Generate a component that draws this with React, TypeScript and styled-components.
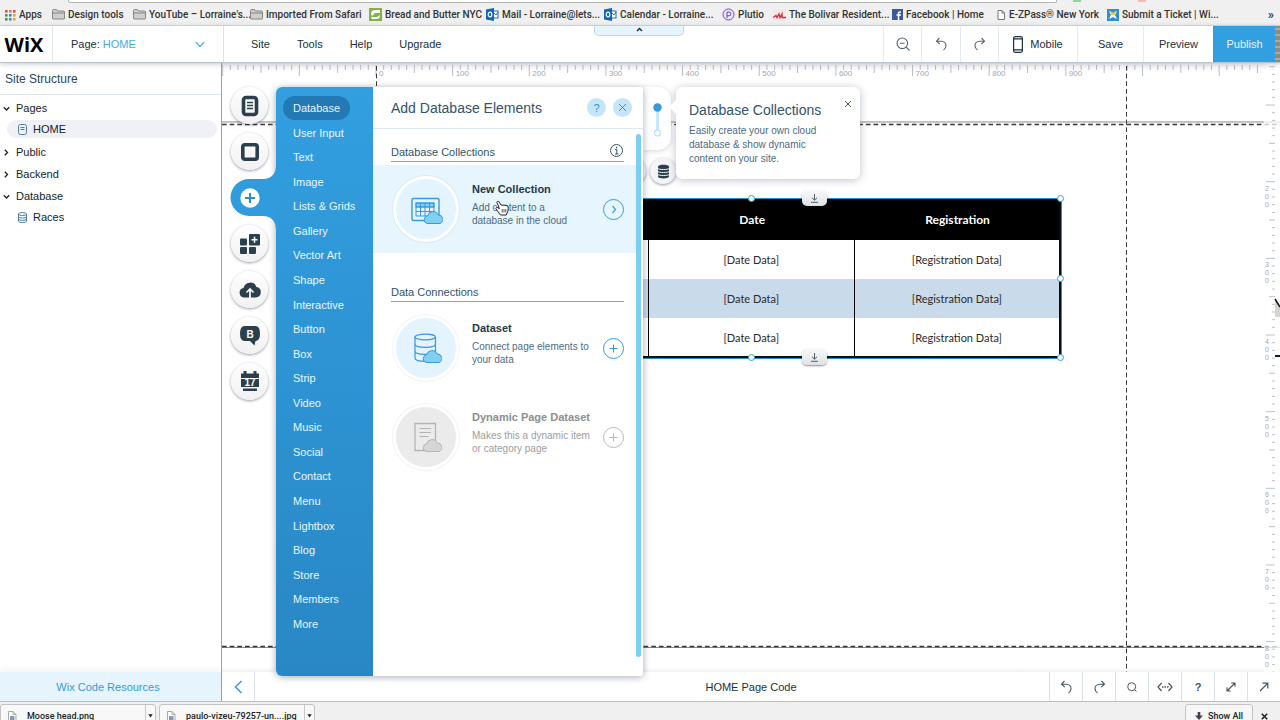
import React from "react";
import styled, { createGlobalStyle, css } from "styled-components";

const sans = `"Liberation Sans", Arial, sans-serif`;
const chrome = `Roboto, Inter, sans-serif`;
const blue = "#3899db";
const slate = "#32536a";
const ink = "#2b3f4c";

const GlobalStyle = createGlobalStyle`
  *, *::before, *::after { box-sizing: border-box; }
  body { margin: 0; background: #fff; font-family: ${sans}; font-size: 11px; color: #20303c; }
  button, select { font: inherit; color: inherit; background: none; border: 0; padding: 0; margin: 0; }
  a { color: inherit; text-decoration: none; }
  ul, h1, h2, h3, p { margin: 0; padding: 0; font-size: inherit; font-weight: 400; list-style: none; }
  svg { display: block; flex: none; }
`;

const Window = styled.div`
  display: flex;
  flex-direction: column;
  height: 100vh;
  min-height: 640px;
  overflow: hidden;
`;

/* ---------- browser chrome ---------- */

const AddressEdge = styled.div`
  display: flex;
  height: 3px;
  padding: 0 134px 0 68px;
  background: #f0f0f0;
`;
const AddressField = styled.div`
  flex: 1;
  height: 3px;
  background: #fff;
  border: 1px solid #b5b5b5;
  border-top: 0;
  border-radius: 0 0 2px 2px;
`;
const ExtensionEdge = styled.span<{ $color: string; $gap: number }>`
  width: 8px;
  height: 2px;
  margin-left: ${(p) => p.$gap}px;
  background: ${(p) => p.$color};
`;
const Bookmarks = styled.nav`
  flex: none;
  display: flex;
  align-items: center;
  height: 23px;
  padding: 1px 6px 0 4px;
  background: #f0f0f0;
  border-bottom: 1px solid #dcdcdc;
  font-family: ${chrome};
  font-size: 10px;
  font-weight: 500;
  color: #333;
`;
const Bookmark = styled.a<{ $width: number }>`
  flex: none;
  display: flex;
  align-items: center;
  gap: 3px;
  width: ${(p) => p.$width}px;
  white-space: nowrap;
`;
const MoreBookmarks = styled.button`
  margin-left: auto;
  font-size: 13px;
`;

/* ---------- editor top bar ---------- */

const TopBar = styled.header`
  position: relative;
  z-index: 5;
  flex: none;
  display: flex;
  height: 37px;
  background: #fff;
  border-bottom: 1px solid #b9c1cb;
  box-shadow: 0 1px 5px rgba(40, 50, 80, 0.28);
`;
const Logo = styled.a`
  display: flex;
  align-items: center;
  justify-content: center;
  width: 53px;
  padding-right: 4px;
  border-right: 1px solid #dfe8f0;
  font: 700 20px "Open Sans", sans-serif;
  color: #000;
`;
const PagePicker = styled.label`
  position: relative;
  display: flex;
  align-items: center;
  gap: 3px;
  width: 171px;
  padding: 0 18px;
  border-right: 1px solid #d5e4ee;
  > svg { position: absolute; right: 18px; top: 15px; pointer-events: none; }
`;
const PageSelect = styled.select`
  flex: 1;
  appearance: none;
  color: #4aa9e0;
  outline: none;
`;
const Menu = styled.nav`
  display: flex;
  align-items: center;
  gap: 27px;
  padding-left: 27px;
  margin-right: auto;
`;
const PullTab = styled.button`
  position: absolute;
  top: 0;
  left: calc(50% - 46px);
  display: flex;
  justify-content: center;
  width: 90px;
  height: 10px;
  background: #e6f4fc;
  border: 1px solid #bcd9ea;
  border-top: 0;
  border-radius: 0 0 5px 5px;
`;
const BarCell = styled.button<{ $width: number; $primary?: boolean; $icon?: boolean }>`
  display: flex;
  align-items: center;
  justify-content: center;
  gap: 7px;
  width: ${(p) => p.$width}px;
  height: 36px;
  border-left: 1px solid #e3ebf0;
  ${(p) => p.$icon && css`color: #59636d;`}
  ${(p) => p.$primary && css`
    background: #329fe0;
    border-color: #329fe0;
    color: #e9f5fd;
  `}
`;
const Wallpaper = styled.div`
  width: 5px;
  background: repeating-linear-gradient(#8d8a86 0 2px, #b3a7a0 2px 4px, #80917e 4px 6px);
`;

/* ---------- main area ---------- */

const Main = styled.main`
  flex: 1;
  display: flex;
  min-height: 0;
`;
const Sidebar = styled.aside`
  flex: none;
  display: flex;
  flex-direction: column;
  width: 222px;
  border-right: 1px solid #63b3d8;
`;
const SidebarTitle = styled.h2`
  height: 32px;
  padding: 1px 5px 0;
  line-height: 31px;
  font-size: 12px;
  color: #29465a;
  border-bottom: 1px solid #dfe6ee;
`;
const Tree = styled.ul`
  flex: 1;
  padding-top: 2px;
  color: #16222b;
`;
const Branch = styled.button`
  display: flex;
  align-items: center;
  gap: 6px;
  width: 100%;
  height: 22px;
  padding-left: 3px;
`;
const Leaf = styled.button<{ $selected?: boolean }>`
  display: flex;
  align-items: center;
  gap: 5px;
  width: 210px;
  height: 18px;
  margin: 1px 0 3px 7px;
  padding-left: 10px;
  border-radius: 9px;
  background: ${(p) => (p.$selected ? "#eff1f6" : "none")};
`;
const SidebarFooter = styled.button`
  height: 29px;
  padding-right: 5px;
  background: #e6f5fd;
  color: ${blue};
  box-shadow: 0 -3px 5px rgba(60, 60, 60, 0.05);
`;
const Workspace = styled.section`
  flex: 1;
  display: flex;
  flex-direction: column;
  min-width: 0;
`;
const Canvas = styled.div`
  position: relative;
  z-index: 1;
  flex: 1;
  min-height: 0;
`;
const Stage = styled.div`
  position: absolute;
  inset: 0;
  overflow: hidden;
  background: linear-gradient(rgba(60, 60, 80, 0.06), transparent 10px) , linear-gradient(0deg, #f1f1f1, #fff 5px);
`;
const Layer = styled.svg`
  position: absolute;
  inset: 0;
  width: 100%;
  height: 100%;
`;
const VerticalRuler = styled.svg`
  position: absolute;
  top: 0;
  right: 0;
  width: 16px;
  height: 100%;
  background: rgba(255, 255, 255, 0.75);
`;

const Selection = styled.div`
  position: absolute;
  left: 219px;
  top: 135px;
  width: 621px;
  border: 1px solid #2b8fc9;
`;
const DataTable = styled.table`
  width: 100%;
  table-layout: fixed;
  border-collapse: collapse;
  border-right: 2px solid #021018;
  border-bottom: 2px solid #021018;
  font-family: Lato, "Open Sans", sans-serif;
  font-size: 11px;
  color: #2a2a2a;
`;
const HeadCell = styled.th`
  height: 41px;
  padding: 0 0 0 2px;
  background: #000;
  color: #fff;
  font-weight: 700;
  font-size: 12px;
`;
const DataRow = styled.tr<{ $tinted: boolean }>`
  background: ${(p) => (p.$tinted ? "#c9daea" : "#fff")};
`;
const DataCell = styled.td`
  height: 39px;
  padding: 0;
  text-align: center;
  border-left: 1px solid #000;
`;
const Handle = styled.span<{ $x: string; $y: string }>`
  position: absolute;
  left: ${(p) => p.$x};
  top: ${(p) => p.$y};
  width: 7px;
  height: 7px;
  margin: -4px;
  border: 1px solid #3b9fd8;
  border-radius: 50%;
  background: #fff;
`;
const StretchButton = styled.button<{ $y: string }>`
  position: absolute;
  left: calc(50% + 50px);
  top: ${(p) => p.$y};
  display: flex;
  align-items: center;
  justify-content: center;
  width: 25px;
  height: 16px;
  margin-top: -9px;
  border-radius: 5px;
  background: linear-gradient(#f8f9fa, #dfe2e5);
  box-shadow: 0 1px 2px rgba(0, 0, 0, 0.45);
`;

/* ---------- floating tools ---------- */

const Rail = styled.nav`
  position: absolute;
  z-index: 4;
  left: 9px;
  top: 24px;
  display: flex;
  flex-direction: column;
  gap: 9px;
`;
const RailButton = styled.button<{ $active?: boolean }>`
  position: relative;
  display: flex;
  align-items: center;
  justify-content: center;
  width: 37px;
  height: 37px;
  border-radius: 50%;
  color: ${ink};
  ${(p) => !p.$active && css`
    background: linear-gradient(#fff, #f1f1f3);
    box-shadow: 0 1px 3px rgba(20, 30, 50, 0.45);
  `}
`;
const ActiveTab = styled.svg`
  position: absolute;
  left: -1px;
  top: -14px;
`;
const PlusBadge = styled.svg`
  position: relative;
`;

const SizeSlider = styled.div`
  position: absolute;
  left: 421px;
  top: 24px;
  display: flex;
  justify-content: center;
  width: 28px;
  height: 63px;
  padding-top: 15px;
  background: #fff;
  border-radius: 0 13px 13px 0;
  box-shadow: 0 1px 5px rgba(40, 50, 80, 0.22);
`;
const DataButtons = styled.div`
  position: absolute;
  left: 398px;
  top: 95px;
  display: flex;
  gap: 4px;
`;
const DataButton = styled.button`
  display: flex;
  align-items: center;
  justify-content: center;
  width: 26px;
  height: 26px;
  border-radius: 50%;
  background: #f4f5f7;
  color: ${ink};
  box-shadow: 0 1px 3px rgba(20, 30, 50, 0.45);
`;
const Tip = styled.section`
  position: absolute;
  left: 454px;
  top: 24px;
  width: 184px;
  padding: 15px 13px 13px;
  background: #fff;
  border-radius: 6px;
  box-shadow: 0 1px 8px rgba(40, 50, 80, 0.3);
  color: ${slate};
  &::before {
    content: "";
    position: absolute;
    left: -7px;
    top: 13px;
    border: 7px solid transparent;
    border-left: 0;
    border-right-color: #fff;
  }
`;
const TipTitle = styled.h2`
  font-size: 14px;
  line-height: 16px;
  margin-bottom: 6px;
`;
const TipText = styled.p`
  font-size: 10px;
  line-height: 14px;
  color: #4c6a82;
`;
const TipClose = styled.button`
  position: absolute;
  right: 8px;
  top: 13px;
`;

/* ---------- add panel ---------- */

const AddPanel = styled.section`
  position: absolute;
  z-index: 3;
  left: 54px;
  top: 24px;
  bottom: -4px;
  display: flex;
  width: 367px;
  border-radius: 6px 3px 3px 6px;
  overflow: hidden;
  background: #fff;
`;
const PanelShadow = styled(AddPanel).attrs({ as: "div" })`
  z-index: 2;
  box-shadow: 0 1px 7px rgba(30, 40, 70, 0.4);
`;
const Categories = styled.nav`
  flex: none;
  display: flex;
  flex-direction: column;
  justify-content: space-between;
  align-items: flex-start;
  width: 97px;
  padding: 9px 7px 40px;
  background: linear-gradient(#329fe0, #2987c5);
  color: #eaf6fe;
`;
const Category = styled.button<{ $selected?: boolean }>`
  height: 24px;
  padding: 0 10px;
  border-radius: 12px;
  background: ${(p) => (p.$selected ? "#2279b4" : "none")};
`;
const PanelBody = styled.div`
  flex: 1;
  display: flex;
  flex-direction: column;
  min-width: 0;
`;
const PanelHeader = styled.header`
  display: flex;
  align-items: center;
  gap: 7px;
  height: 42px;
  padding: 0 11px 0 18px;
  border-bottom: 1px solid #dde7ee;
  color: ${slate};
`;
const PanelTitle = styled.h1`
  flex: 1;
  font-size: 14px;
`;
const RoundButton = styled.button`
  display: flex;
  align-items: center;
  justify-content: center;
  width: 19px;
  height: 19px;
  border-radius: 50%;
  background: #c5e5f9;
  color: #2f93d0;
`;
const ScrollArea = styled.div`
  flex: 1;
  display: flex;
  min-height: 0;
`;
const Sections = styled.div`
  flex: 1;
  min-width: 0;
`;
const ScrollTrack = styled.div`
  flex: none;
  display: flex;
  width: 7px;
  padding: 5px 2px 19px 0;
`;
const ScrollThumb = styled.div`
  flex: 1;
  border-radius: 3px;
  background: #7dcff2;
`;
const SectionHead = styled.div<{ $later?: boolean }>`
  display: flex;
  align-items: center;
  justify-content: space-between;
  height: 20px;
  margin: ${(p) => (p.$later ? "29px 12px 2px 18px" : "13px 12px 3px 18px")};
  border-bottom: 1px solid #8ea2b3;
  color: ${slate};
`;
const SectionTitle = styled.h2`
  padding-top: 1px;
`;
const Entry = styled.article<{ $hot?: boolean; $muted?: boolean }>`
  display: flex;
  align-items: center;
  height: 88px;
  margin-bottom: 1px;
  padding: 0 12px 0 20px;
  background: ${(p) => (p.$hot ? "#e6f5fe" : "none")};
  color: ${(p) => (p.$muted ? "#9a9ea1" : "#4f6c7f")};
  --accent: ${(p) => (p.$muted ? "#b7b9bb" : blue)};
`;
const EntryArt = styled.div<{ $muted?: boolean }>`
  flex: none;
  display: flex;
  align-items: center;
  justify-content: center;
  width: 66px;
  height: 66px;
  border: 3px solid #fff;
  border-radius: 50%;
  background: ${(p) => (p.$muted ? "#ebebeb" : "#e3f4fe")};
  box-shadow: 0 0 0 1px rgba(90, 90, 110, 0.07);
`;
const EntryText = styled.div`
  flex: 1;
  min-width: 0;
  padding: 0 0 9px 13px;
  font-size: 10px;
  line-height: 13px;
  white-space: nowrap;
`;
const EntryTitle = styled.h3<{ $muted?: boolean }>`
  margin-bottom: 5px;
  font-size: 11px;
  font-weight: 700;
  color: ${(p) => (p.$muted ? "#8b8e90" : "#22394a")};
`;
const EntryButton = styled.button`
  flex: none;
  display: flex;
  align-items: center;
  justify-content: center;
  width: 21px;
  height: 21px;
  border: 1px solid var(--accent);
  border-radius: 50%;
  color: var(--accent);
`;
const Pointer = styled.svg`
  position: absolute;
  z-index: 6;
  left: 273px;
  top: 137px;
`;

/* ---------- bottom bars ---------- */

const CodeBar = styled.footer`
  flex: none;
  display: grid;
  grid-template-columns: 1fr auto 1fr;
  align-items: center;
  height: 29px;
  background: #fff;
`;
const CodeTools = styled.div`
  display: flex;
  justify-content: flex-end;
`;
const CodeTool = styled.button<{ $edge?: "right" }>`
  display: flex;
  align-items: center;
  justify-content: center;
  width: 33px;
  height: 29px;
  font-weight: 700;
  color: #46555f;
  border-${(p) => p.$edge ?? "left"}: 1px solid #dbe2e8;
`;
const Shelf = styled.footer`
  flex: none;
  display: flex;
  align-items: flex-start;
  gap: 3px;
  height: 19px;
  padding: 2px 8px 0 0;
  overflow: hidden;
  background: #f0f0f0;
  border-top: 1px solid #bdbdbd;
  font-family: ${chrome};
  font-size: 9px;
  font-weight: 500;
  color: #222;
`;
const Download = styled.div`
  display: flex;
  width: 156px;
  height: 24px;
  background: #f8f8f8;
  border: 1px solid #c4c4c4;
  border-radius: 3px 3px 0 0;
`;
const DownloadName = styled.button`
  flex: 1;
  display: flex;
  align-items: center;
  gap: 10px;
  padding-left: 7px;
  text-align: left;
  white-space: nowrap;
`;
const DownloadMenu = styled.button`
  display: flex;
  align-items: center;
  justify-content: center;
  width: 10px;
  border-left: 1px solid #c9c9c9;
`;
const ShowAll = styled.button`
  display: flex;
  align-items: center;
  justify-content: center;
  gap: 5px;
  width: 68px;
  height: 24px;
  margin-left: auto;
  background: #f6f6f6;
  border: 1px solid #c4c4c4;
  border-radius: 3px 3px 0 0;
`;
const ShelfClose = styled.button`
  display: flex;
  align-items: center;
  justify-content: center;
  width: 16px;
  height: 24px;
`;

/* ---------- icons ---------- */

type LineProps = { w: number; h: number; sw?: number; children: React.ReactNode };
const Line = ({ w, h, sw = 1, children }: LineProps) => (
  <svg width={w} height={h} viewBox={`0 0 ${w} ${h}`} fill="none" stroke="currentColor" strokeWidth={sw} aria-hidden="true">
    {children}
  </svg>
);

const AppsIcon = () => (
  <svg width="12" height="12" aria-hidden="true">
    {["#d9534a", "#e07a52", "#d9534a", "#3f9a59", "#3f7fc4", "#e0a83a", "#3f9a59", "#5a8a9c", "#e0a83a"].map((c, i) => (
      <rect key={i} x={(i % 3) * 4 + 1} y={Math.floor(i / 3) * 4 + 1} width="2.6" height="2.6" fill={c} />
    ))}
  </svg>
);
const FolderIcon = () => (
  <svg width="13" height="11" aria-hidden="true">
    <path d="M.5 9.5v-8q0-1 1-1h3l1 1.5h6q1 0 1 1v6.500q0 .5-.5.5H1q-.5 0-.5-.5zM.5 4h12" fill="#cfcfcf" stroke="#858585" />
  </svg>
);
const LeafIcon = () => (
  <svg width="13" height="13" aria-hidden="true">
    <rect width="13" height="13" fill="#7fb24f" />
    <path d="M2 6C2 3 4 2 7 2h4v3H6L3 8zM3 11h4c3 0 4-1 4-4L8 9H2z" fill="#fff" />
  </svg>
);
const OutlookIcon = () => (
  <svg width="13" height="13" aria-hidden="true">
    <rect x="6" y="3" width="6" height="7" fill="#fff" stroke="#1c6fc0" />
    <path d="M7 4l3 3 2-3" stroke="#1c6fc0" fill="none" />
    <path d="M0 1.500L8 0v13l-8-1.500z" fill="#0f67bb" />
    <ellipse cx="4" cy="6.500" rx="1.800" ry="2.300" fill="none" stroke="#fff" strokeWidth="1.200" />
  </svg>
);
const PlutioIcon = () => (
  <svg width="13" height="13" aria-hidden="true" fill="none" stroke="#6b3fd6">
    <circle cx="6.500" cy="6.500" r="5.500" fill="#efe9fd" />
    <path d="M5 10V4h2a1.800 1.800 0 0 1 0 3.800H5" />
  </svg>
);
const WaveIcon = () => (
  <svg width="13" height="12" aria-hidden="true">
    <rect width="13" height="12" fill="#f7e6e6" />
    <path d="M0 8.500l3-2 1 2 2-3.500 1 3.500 2-3.500v3.500h4" fill="none" stroke="#c8324a" strokeWidth="1.300" />
  </svg>
);
const FacebookIcon = () => (
  <svg width="11" height="11" aria-hidden="true">
    <rect width="11" height="11" fill="#3b5998" />
    <path d="M6.500 11V4.200q0-1.500 2.500-1.200M4.500 6H9" fill="none" stroke="#fff" strokeWidth="1.500" />
  </svg>
);
const FileIcon = () => (
  <svg width="9" height="12" aria-hidden="true">
    <path d="M1 1.500h4l2.500 2.500v6.500H1zM5 1.500V4h2.500" fill="#fff" stroke="#777" />
  </svg>
);
const ImageFileIcon = () => (
  <svg width="9" height="12" aria-hidden="true">
    <path d="M.5 1.500h4.500l3 3v7H.5zM5 1.500v3h3" fill="#fff" stroke="#aaa" />
    <rect x="2" y="6" width="4.500" height="4" fill="#8c97b0" />
  </svg>
);
const TicketIcon = () => (
  <svg width="12" height="12" aria-hidden="true">
    <rect width="12" height="12" fill="#2f8fd5" />
    <path d="M2 2l4 2 4-2-2 4 2 4-4-2-4 2 2-4z" fill="#fff" />
    <path d="M3 2l3 2 3-2-1 4H4z" fill="#f4c93a" />
  </svg>
);
const ChevronIcon = ({ open }: { open: boolean }) => (
  <Line w={7} h={7} sw={1.3}>{open ? <path d="M.8 2.300l2.700 2.700 2.700-2.700" /> : <path d="M1.800.8l2.700 2.700-2.700 2.700" />}</Line>
);
const UndoIcon = () => (
  <Line w={13} h={14} sw={1.1}>
    <path d="M4.500 1L1.500 4.200l3.300 3M1.500 4.200h4.700c3.300 0 4.800 2.300 4.800 4.300S10.300 12 8.500 13" />
  </Line>
);
const RedoIcon = () => (
  <Line w={13} h={14} sw={1.1}>
    <path d="M8.500 1l3 3.200-3.300 3M11.500 4.200H6.800C3.500 4.200 2 6.500 2 8.500S2.700 12 4.500 13" />
  </Line>
);
const StretchIcon = () => (
  <Line w={9} h={9}><g stroke="#55606a"><path d="M4.500 0v6M2 3.800l2.500 2.400L7 3.800M1 8.300h7" /></g></Line>
);
const cloud = "M14.500 29.500a3.900 3.900 0 0 1 .6-7.600 5.600 5.600 0 0 1 10.600-.9 4.400 4.400 0 0 1 1.800 8.500z";

const CollectionArt = () => (
  <svg width="34" height="31" aria-hidden="true" fill="none" stroke="#3899db">
    <rect x="3" y="4.500" width="27" height="22" rx="1.500" strokeWidth="1.400" />
    <rect x="7" y="9" width="18" height="4" fill="#7fd0f2" />
    <path d="M7 9h18v13H7zM7 13h18M7 17.500h18M11.500 9v13M16 9v13M20.500 9v13" />
    <path d={cloud} transform="translate(3.500 0)" fill="#7fd0f2" />
  </svg>
);
const DatasetArt = () => (
  <svg width="32" height="32" aria-hidden="true" fill="none" stroke="#3899db" strokeWidth="1.200">
    <path d="M5 5v21c0 2 4 3.300 10.300 3.300s10.200-1.300 10.200-3.300V5M5 12c0 2 4 3.300 10.300 3.300s10.200-1.300 10.200-3.300M5 19c0 2 4 3.300 10.300 3.300s10.200-1.300 10.200-3.300" />
    <ellipse cx="15.200" cy="5" rx="10.200" ry="2.800" />
    <path d={cloud} transform="translate(1.500 1)" fill="#7fd0f2" strokeWidth="1" />
  </svg>
);
const DynamicArt = () => (
  <svg width="32" height="32" aria-hidden="true" fill="none" stroke="#b4b4b4">
    <path d="M5 2.500h20.500v27H5z" strokeWidth="1.300" />
    <path d="M9.500 7.500h11.500M9.500 11.500h11.500M9.500 15.500h9" />
    <path d={cloud} transform="translate(1.500 1)" fill="#d6d6d6" />
  </svg>
);

const railIcons = {
  pages: (
    <Line w={18} h={22}>
      <rect x="2.500" y="2.500" width="13" height="17" rx="2.500" strokeWidth="3.600" />
      <path d="M6 7.500h6M6 10.500h6M6 13.500h6" strokeWidth="1.300" />
    </Line>
  ),
  background: <Line w={20} h={20} sw={3.6}><rect x="2.800" y="2.800" width="14.400" height="14.400" rx="2" /></Line>,
  apps: (
    <svg width="20" height="20" fill="currentColor" aria-hidden="true">
      <rect x="0" y="4.500" width="7" height="7" rx="1" />
      <rect x="9" y="0" width="11" height="11.500" rx="1" />
      <rect x="0" y="13" width="7" height="7" rx="1" />
      <rect x="9" y="13" width="7" height="7" rx="1" />
      <path d="M14.500 2.800v6M11.500 5.800h6" stroke="#fff" strokeWidth="1.500" />
    </svg>
  ),
  upload: (
    <svg width="22" height="17" fill="currentColor" aria-hidden="true">
      <path d="M5 16.500a4.800 4.800 0 0 1-.5-9.500A6.800 6.800 0 0 1 17.500 6a5.300 5.300 0 0 1-.8 10.500z" />
      <path d="M11 17V8.500M7.500 11.500L11 8l3.500 3.500" fill="none" stroke="#fff" strokeWidth="1.700" />
    </svg>
  ),
  blog: (
    <svg width="22" height="21" aria-hidden="true">
      <path d="M5.500 1h11Q21 1 21 8.500T16.500 16L15.500 20.500 11 16H5.500Q1 16 1 8.500T5.500 1z" fill="currentColor" />
      <text x="11" y="12.500" textAnchor="middle" fontFamily={sans} fontSize="10" fontWeight="700" fill="#fff">B</text>
    </svg>
  ),
  bookings: (
    <svg width="20" height="21" aria-hidden="true">
      <path d="M1 2.500h18V7H1zM1 8h18v8H1zM3 17.500h14V20H3z" fill="currentColor" />
      <path d="M5 0v4.500M15 0v4.500" stroke="currentColor" strokeWidth="3" />
      <text x="10" y="14.500" textAnchor="middle" fontFamily={sans} fontSize="10" fontWeight="700" fill="#fff">17</text>
    </svg>
  ),
};

/* ---------- data ---------- */

const bookmarks: { label: string; width: number; icon: React.ReactNode }[] = [
  { label: "Apps", width: 48, icon: <AppsIcon /> },
  { label: "Design tools", width: 81, icon: <FolderIcon /> },
  { label: "YouTube – Lorraine's...", width: 117, icon: <FolderIcon /> },
  { label: "Imported From Safari", width: 119, icon: <FolderIcon /> },
  { label: "Bread and Butter NYC", width: 117, icon: <LeafIcon /> },
  { label: "Mail - Lorraine@lets...", width: 118, icon: <OutlookIcon /> },
  { label: "Calendar - Lorraine...", width: 118, icon: <OutlookIcon /> },
  { label: "Plutio", width: 51, icon: <PlutioIcon /> },
  { label: "The Bolivar Resident...", width: 119, icon: <WaveIcon /> },
  { label: "Facebook | Home", width: 105, icon: <FacebookIcon /> },
  { label: "E-ZPass® New York", width: 110, icon: <FileIcon /> },
  { label: "Submit a Ticket | Wi...", width: 115, icon: <TicketIcon /> },
];
const categories = [
  "Database", "User Input", "Text", "Image", "Lists & Grids", "Gallery", "Vector Art", "Shape",
  "Interactive", "Button", "Box", "Strip", "Video", "Music", "Social", "Contact", "Menu",
  "Lightbox", "Blog", "Store", "Members", "More",
];

/* The page is shown at 76.65% zoom: one ruler tick is ten page pixels. */
const TICK = 7.665;
const ORIGIN_X = 154;
const ORIGIN_Y = -34.6;

const HorizontalRuler = () => (
  <g stroke="#b9bdc4" fontFamily={sans} fontSize="8">
    {Array.from({ length: 260 }, (_, k) => k - 20).map((i) => {
      const x = ORIGIN_X + i * TICK;
      const len = i % 10 === 0 ? 11 : i % 5 === 0 ? 8 : 5;
      return (
        <React.Fragment key={i}>
          <path d={`M${x} 2v${len}`} />
          {i >= 0 && i <= 90 && i % 10 === 0 && (
            <text x={x + 3} y={13} fill="#a3a6ad" stroke="none">{i * 10}</text>
          )}
        </React.Fragment>
      );
    })}
  </g>
);

const SideRuler = () => (
  <VerticalRuler aria-hidden="true" fontFamily={sans} fontSize="7">
    {Array.from({ length: 180 }, (_, i) => {
      const y = ORIGIN_Y + i * TICK;
      const len = i % 10 === 0 ? 9 : i % 5 === 0 ? 6 : 3;
      return (
        <React.Fragment key={i}>
          <path d={`M11 ${y}h-${len}`} stroke="#bfc2c8" />
          {i >= 20 && i <= 80 && i % 10 === 0 && String(i * 10).split("").map((d, n) => (
            <text key={n} x="1" y={y + 9 + n * 8} fill="#a3a6ad">{d}</text>
          ))}
        </React.Fragment>
      );
    })}
    <path d="M11 236l5 8v10h-5z" fill="#d8d4d0" />
    <path d="M11 236l5 8" stroke="#111" strokeWidth="1.500" />
    <path d="M11 293h5" stroke="#0d1c28" strokeWidth="2" />
  </VerticalRuler>
);

const Guides = () => (
  <Layer aria-hidden="true">
    <HorizontalRuler />
    <path d="M0 59h3000" stroke="#c4c4c4" strokeWidth="2" />
    <g stroke="#3a3538" strokeDasharray="4.665 3">
      <path d="M0 61.500h3000" strokeWidth="1.500" />
      <path d="M154.500 3v3000M904.500 3v3000" />
    </g>
    <path d="M0 584.500h3000" stroke="#8b8487" />
    <path d="M0 583.500h3000" stroke="#3a3538" strokeDasharray="4.665 3" strokeWidth="1.500" />
  </Layer>
);

type EntryProps = {
  title: string;
  lines: [string, string];
  art: React.ReactNode;
  action: "open" | "add";
  hot?: boolean;
  muted?: boolean;
};
const PanelEntry = ({ title, lines, art, action, hot, muted }: EntryProps) => (
  <Entry $hot={hot} $muted={muted}>
    <EntryArt $muted={muted}>{art}</EntryArt>
    <EntryText>
      <EntryTitle $muted={muted}>{title}</EntryTitle>
      <p>{lines[0]}<br />{lines[1]}</p>
    </EntryText>
    <EntryButton aria-label={title} disabled={muted}>
      <Line w={9} h={9}>{action === "open" ? <path d="M3.500.8l3 3.700-3 3.700" strokeWidth="1.200" /> : <path d="M4.500.5v8M.5 4.500h8" />}</Line>
    </EntryButton>
  </Entry>
);

export default function App() {
  return (
    <Window>
      <GlobalStyle />
      <AddressEdge>
        <AddressField />
        <ExtensionEdge $color="#8ed69a" $gap={16} />
        <ExtensionEdge $color="#f5b9a8" $gap={57} />
      </AddressEdge>
      <Bookmarks aria-label="Bookmarks">
        {bookmarks.map((b) => (
          <Bookmark key={b.label} href="#" $width={b.width}>{b.icon}{b.label}</Bookmark>
        ))}
        <MoreBookmarks>»</MoreBookmarks>
      </Bookmarks>

      <TopBar>
        <Logo href="#">WiX</Logo>
        <PagePicker>
          Page:
          <PageSelect defaultValue="HOME"><option>HOME</option></PageSelect>
          <svg width="10" height="7" fill="none" stroke="#4fb0e4" aria-hidden="true"><path d="M.8 1l4.200 4.500L9.200 1" strokeWidth="1.200" /></svg>
        </PagePicker>
        <Menu>
          {["Site", "Tools", "Help", "Upgrade"].map((m) => <button key={m}>{m}</button>)}
        </Menu>
        <PullTab aria-label="Hide toolbar"><Line w={7} h={8} sw={1.5}><path d="M1 5l2.500-2.500L6 5" /></Line></PullTab>
        <BarCell $width={38} $icon aria-label="Zoom out">
          <Line w={14} h={14} sw={1.1}><circle cx="6.300" cy="6.300" r="5.300" /><path d="M10.200 10.200l3.300 3.300M4 6.300h4.600" /></Line>
        </BarCell>
        <BarCell $width={39} $icon aria-label="Undo"><UndoIcon /></BarCell>
        <BarCell $width={38} $icon aria-label="Redo"><RedoIcon /></BarCell>
        <BarCell $width={79}>
          <Line w={10} h={17} sw={1.2}><rect x=".6" y=".6" width="8.800" height="15.800" rx="1.800" /><path d="M.6 2.800h8.800M.6 13.800h8.800" /></Line>
          Mobile
        </BarCell>
        <BarCell $width={66}>Save</BarCell>
        <BarCell $width={70}>Preview</BarCell>
        <BarCell $width={62} $primary>Publish</BarCell>
        <Wallpaper />
      </TopBar>

      <Main>
        <Sidebar>
          <SidebarTitle>Site Structure</SidebarTitle>
          <Tree>
            <li>
              <Branch><ChevronIcon open />Pages</Branch>
              <Leaf $selected>
                <Line w={11} h={11}><rect x="1.500" y=".5" width="8" height="10" rx="2" stroke="#4a7f9e" /><path d="M3.500 3.500h4M3.500 5.500h4" stroke="#4a7f9e" /></Line>
                HOME
              </Leaf>
            </li>
            <li><Branch><ChevronIcon open={false} />Public</Branch></li>
            <li><Branch><ChevronIcon open={false} />Backend</Branch></li>
            <li>
              <Branch><ChevronIcon open />Database</Branch>
              <Leaf>
                <Line w={11} h={11}>
                  <g stroke="#4a7f9e"><ellipse cx="5.500" cy="2" rx="4" ry="1.500" /><path d="M1.500 2v7c0 2 8 2 8 0V2M1.500 4.500c0 2 8 2 8 0M1.500 6.800c0 2 8 2 8 0" /></g>
                </Line>
                Races
              </Leaf>
            </li>
          </Tree>
          <SidebarFooter>Wix Code Resources</SidebarFooter>
        </Sidebar>

        <Workspace>
          <Canvas>
            <Stage>
              <Guides />
              <SideRuler />
              <Selection>
                <DataTable>
                  <thead>
                    <tr><HeadCell /><HeadCell>Date</HeadCell><HeadCell>Registration</HeadCell></tr>
                  </thead>
                  <tbody>
                    {[false, true, false].map((tinted, i) => (
                      <DataRow key={i} $tinted={tinted}>
                        <DataCell /><DataCell>[Date Data]</DataCell><DataCell>[Registration Data]</DataCell>
                      </DataRow>
                    ))}
                  </tbody>
                </DataTable>
                <Handle $x="50%" $y="0%" />
                <Handle $x="100%" $y="0%" />
                <Handle $x="100%" $y="50%" />
                <Handle $x="100%" $y="100%" />
                <Handle $x="50%" $y="100%" />
                <StretchButton $y="0%" aria-label="Stretch top"><StretchIcon /></StretchButton>
                <StretchButton $y="100%" aria-label="Stretch bottom"><StretchIcon /></StretchButton>
              </Selection>
            </Stage>

            <SizeSlider>
              <svg width="11" height="37" fill="none" aria-hidden="true">
                <path d="M5.500 6v24" stroke="#c9e8f9" strokeWidth="3" />
                <circle cx="5.500" cy="5.500" r="4.200" fill="#2f9be0" />
                <circle cx="5.500" cy="31" r="3" fill="#fff" stroke="#bfe2f6" strokeWidth="1.300" />
              </svg>
            </SizeSlider>
            <DataButtons>
              <DataButton aria-label="Settings" />
              <DataButton aria-label="Connect to data">
                <svg width="13" height="15" aria-hidden="true">
                  <path d="M1 2.500C1 0 12 0 12 2.500v10c0 2.500-11 2.500-11 0z" fill="currentColor" />
                  <path d="M0 4c1 2 12 2 13 0M0 7c1 2 12 2 13 0M0 10c1 2 12 2 13 0" fill="none" stroke="#f4f5f7" />
                </svg>
              </DataButton>
            </DataButtons>
            <Tip>
              <TipTitle>Database Collections</TipTitle>
              <TipText>Easily create your own cloud<br />database &amp; show dynamic<br />content on your site.</TipText>
              <TipClose aria-label="Close tip"><Line w={8} h={8}><path d="M1 1l6 6M7 1L1 7" /></Line></TipClose>
            </Tip>

            <PanelShadow />
            <AddPanel>
              <Categories>
                {categories.map((c, i) => <Category key={c} $selected={i === 0}>{c}</Category>)}
              </Categories>
              <PanelBody>
                <PanelHeader>
                  <PanelTitle>Add Database Elements</PanelTitle>
                  <RoundButton>?</RoundButton>
                  <RoundButton aria-label="Close"><Line w={9} h={9}><path d="M1 1l7 7M8 1L1 8" /></Line></RoundButton>
                </PanelHeader>
                <ScrollArea>
                  <Sections>
                    <SectionHead>
                      <SectionTitle>Database Collections</SectionTitle>
                      <Line w={15} h={15}>
                        <circle cx="7.500" cy="6.500" r="6" />
                        <path d="M6 5.500h1.800v4.500M6 10h3.500" />
                        <path d="M7 3.500h1.300" strokeWidth="1.300" />
                      </Line>
                    </SectionHead>
                    <PanelEntry hot title="New Collection" lines={["Add content to a", "database in the cloud"]} art={<CollectionArt />} action="open" />
                    <SectionHead $later><SectionTitle>Data Connections</SectionTitle></SectionHead>
                    <PanelEntry title="Dataset" lines={["Connect page elements to", "your data"]} art={<DatasetArt />} action="add" />
                    <PanelEntry muted title="Dynamic Page Dataset" lines={["Makes this a dynamic item", "or category page"]} art={<DynamicArt />} action="add" />
                  </Sections>
                  <ScrollTrack><ScrollThumb /></ScrollTrack>
                </ScrollArea>
              </PanelBody>
            </AddPanel>

            <Rail aria-label="Editor tools">
              <RailButton aria-label="Pages">{railIcons.pages}</RailButton>
              <RailButton aria-label="Background">{railIcons.background}</RailButton>
              <RailButton $active aria-label="Add">
                <ActiveTab width="48" height="65" aria-hidden="true">
                  <path d="M48 0h-2C46 9 41 14 33 14H19a18.500 18.500 0 0 0 0 37h14c8 0 13 5 13 14h2z" fill="#319cdd" />
                </ActiveTab>
                <PlusBadge width="20" height="20" aria-hidden="true">
                  <circle cx="10" cy="10" r="9.700" fill="#fff" />
                  <path d="M10 5v10M5 10h10" stroke="#2a8fd0" strokeWidth="2" />
                </PlusBadge>
              </RailButton>
              <RailButton aria-label="App market">{railIcons.apps}</RailButton>
              <RailButton aria-label="Uploads">{railIcons.upload}</RailButton>
              <RailButton aria-label="Blog">{railIcons.blog}</RailButton>
              <RailButton aria-label="Bookings">{railIcons.bookings}</RailButton>
            </Rail>

            <Pointer width="15" height="17" aria-hidden="true">
              <path d="M3.500 6L1.800 2.500Q2 .8 3.800 1.500L6 5l5 .3q2.500.4 2.300 3l-.5 3.200-1.600 3.500H5.500L2.500 11 .8 8.500Q1 7 2.800 7.600l1.600 1.200z" fill="#fff" stroke="#222" />
              <path d="M7.200 9v3.500M9 9v3.500M10.800 9v3.500" stroke="#333" strokeWidth=".8" />
            </Pointer>
          </Canvas>

          <CodeBar>
            <CodeTool $edge="right" aria-label="Collapse resources">
              <svg width="9" height="14" fill="none" stroke={blue} strokeWidth="1.500" aria-hidden="true"><path d="M7.500 1L1.500 7l6 6" /></svg>
            </CodeTool>
            <span>HOME Page Code</span>
            <CodeTools>
              <CodeTool aria-label="Undo"><UndoIcon /></CodeTool>
              <CodeTool aria-label="Redo"><RedoIcon /></CodeTool>
              <CodeTool aria-label="Find"><Line w={10} h={10}><circle cx="4.700" cy="4.700" r="4" /><path d="M7.500 7.500L9.500 9.500" /></Line></CodeTool>
              <CodeTool aria-label="Format code">
                <Line w={16} h={10} sw={1.2}><path d="M4.500 1L1 5l3.500 4M11.500 1L15 5l-3.500 4" /><path d="M5 5h6.500" strokeDasharray="1.500 1" strokeWidth="1.500" /></Line>
              </CodeTool>
              <CodeTool>?</CodeTool>
              <CodeTool aria-label="Expand"><Line w={10} h={10} sw={1.1}><path d="M1 9l8-8M5.200 1H9v3.800M1 5.200V9h3.800" /></Line></CodeTool>
              <CodeTool aria-label="Open in window"><Line w={10} h={10} sw={1.2}><path d="M1 9l7.500-7.500M3.500 1.200h5.300v5.300" /></Line></CodeTool>
            </CodeTools>
          </CodeBar>
        </Workspace>
      </Main>

      <Shelf>
        {["Moose head.png", "paulo-vizeu-79257-un....jpg"].map((name) => (
          <Download key={name}>
            <DownloadName><ImageFileIcon />{name}</DownloadName>
            <DownloadMenu aria-label={`Options for ${name}`}>
              <svg width="5" height="4" fill="#222" aria-hidden="true"><path d="M.3.300h4.400L2.500 3.500z" /></svg>
            </DownloadMenu>
          </Download>
        ))}
        <ShowAll>
          <svg width="8" height="8" fill="#444" aria-hidden="true"><path d="M2.700 0h2.600v3.500H8L4 8 0 3.500h2.700z" /></svg>
          Show All
        </ShowAll>
        <ShelfClose aria-label="Close downloads"><Line w={7} h={7} sw={1.6}><path d="M.8.8l5.400 5.400M6.200.8L.8 6.200" /></Line></ShelfClose>
      </Shelf>
    </Window>
  );
}
